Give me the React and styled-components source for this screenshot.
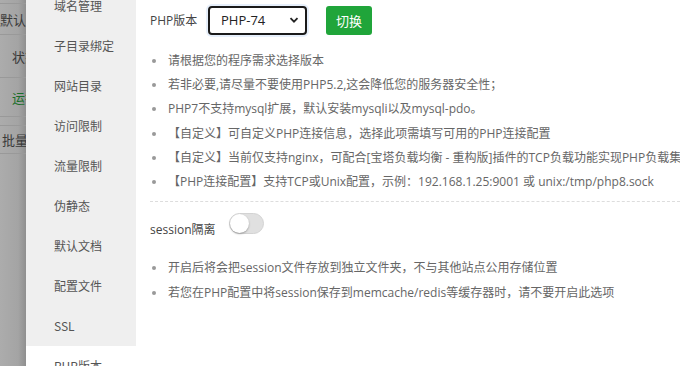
import React from 'react'
import styled, { createGlobalStyle } from 'styled-components'

//Global
const GlobalStyle = createGlobalStyle`
    html, body {
        margin: 0;
        padding: 0;
        background: #fff;
        overflow: hidden;
    }
    body {
        font-family: "Open Sans", "Noto Sans CJK SC", sans-serif;
        font-size: 12px;
    }
`

//Data
const menuItems = ['域名管理', '子目录绑定', '网站目录', '访问限制', '流量限制', '伪静态', '默认文档', '配置文件', 'SSL', 'PHP版本']

const phpTips = [
    '请根据您的程序需求选择版本',
    '若非必要,请尽量不要使用PHP5.2,这会降低您的服务器安全性；',
    'PHP7不支持mysql扩展，默认安装mysqli以及mysql-pdo。',
    '【自定义】可自定义PHP连接信息，选择此项需填写可用的PHP连接配置',
    '【自定义】当前仅支持nginx，可配合[宝塔负载均衡 - 重构版]插件的TCP负载功能实现PHP负载集群',
    '【PHP连接配置】支持TCP或Unix配置，示例：192.168.1.25:9001 或 unix:/tmp/php8.sock',
]

const sessionTips = [
    '开启后将会把session文件存放到独立文件夹，不与其他站点公用存储位置',
    '若您在PHP配置中将session保存到memcache/redis等缓存器时，请不要开启此选项',
]

//Styles
const Page = styled.div`
    display: flex;
    width: 680px;
    height: 366px;
    overflow: hidden;
`
const Backdrop = styled.div`
    width: 26px;
    flex-shrink: 0;
    overflow: hidden;
    background: linear-gradient(to right, #acacac 0%, #a4a4a4 70%, #8f8f8f 100%);
    padding-top: 3px;
`
const BackdropRow = styled.div`
    height: ${p => p.$h}px;
    border-top: 1px solid #999;
    display: flex;
    align-items: center;
    padding-left: ${p => p.$indent}px;
    white-space: nowrap;
    color: ${p => p.$green ? '#1b6e2b' : '#3a3a3a'};
    font-size: 13px;
    font-family: "Noto Sans CJK SC", sans-serif;
`
const Sidebar = styled.div`
    width: 110px;
    flex-shrink: 0;
    background: #efefef;
    overflow: hidden;
`
const Menu = styled.ul`
    list-style: none;
    margin: -14px 0 0;
    padding: 0;
`
const MenuItem = styled.li`
    height: 40px;
    line-height: 40px;
    padding-left: 28px;
    color: #555;
    font-size: 12px;
    background: ${p => p.$active ? '#fff' : 'transparent'};
    font-family: "Noto Sans CJK SC", sans-serif;
`
const Content = styled.div`
    flex: 1;
    padding: 5px 0 0 14px;
    overflow: hidden;
    white-space: nowrap;
`
const VersionRow = styled.div`
    display: flex;
    align-items: center;
    height: 30px;
`
const FieldLabel = styled.span`
    color: #444;
    font-size: 12px;
    width: ${p => p.$w}px;
    flex-shrink: 0;
`
const SelectBox = styled.div`
    box-sizing: border-box;
    width: 99px;
    height: 29px;
    border: 2px solid #1a1a1a;
    border-radius: 4px;
    display: flex;
    align-items: center;
    justify-content: space-between;
    padding: 0 6px 0 11px;
    color: #222;
    font-size: 13px;
    box-shadow: 0 0 0 2px #e6effb;
`
const SwitchButton = styled.button`
    margin-left: 19px;
    width: 46px;
    height: 29px;
    border: none;
    border-radius: 3px;
    background: #20a53a;
    color: #fff;
    font-size: 13px;
    font-family: "Noto Sans CJK SC", sans-serif;
    padding: 0;
`
const TipList = styled.ul`
    list-style: none;
    margin: ${p => p.$top}px 0 0;
    padding: 0 0 0 2px;
`
const Tip = styled.li`
    position: relative;
    height: ${p => p.$h}px;
    line-height: ${p => p.$h}px;
    padding-left: 16px;
    color: #666;
    font-size: 12px;

    &::before {
        content: '';
        position: absolute;
        left: 0;
        top: 50%;
        width: 4px;
        height: 4px;
        margin-top: -2px;
        border-radius: 50%;
        background: #999;
    }
`
const Divider = styled.div`
    margin-top: 7px;
    border-top: 1px dashed #ddd;
`
const SessionRow = styled.div`
    display: flex;
    align-items: center;
    margin-top: 6px;
    height: 30px;
`
const SessionLabel = styled.span`
    color: #444;
    font-size: 12px;
    padding-top: 11px;
    width: 79px;
`
const Toggle = styled.div`
    position: relative;
    box-sizing: border-box;
    width: 35px;
    height: 21px;
    border-radius: 11px;
    background: #e0e0e0;
    border: 1px solid #d3d3d3;

    &::after {
        content: '';
        position: absolute;
        left: 0;
        top: 0;
        width: 19px;
        height: 19px;
        border-radius: 50%;
        background: #fff;
        box-shadow: 0 1px 2px rgba(0,0,0,0.3);
    }
`

//Main Component
function App() {
    return (
        <>
        <GlobalStyle />
        <Page>
            <Backdrop>
                <BackdropRow $h={30} $indent={0}>默认站</BackdropRow>
                <BackdropRow $h={42} $indent={12}>状态</BackdropRow>
                <BackdropRow $h={38} $indent={12} $green>运行</BackdropRow>
                <BackdropRow $h={8} $indent={0}></BackdropRow>
                <BackdropRow $h={27} $indent={2}>批量</BackdropRow>
                <BackdropRow $h={1} $indent={0}></BackdropRow>
            </Backdrop>

            <Sidebar>
                <Menu>
                    { menuItems.map(item => (
                        <MenuItem key={item} $active={item === 'PHP版本'}>{item}</MenuItem>
                    ))}
                </Menu>
            </Sidebar>

            <Content>
                <VersionRow>
                    <FieldLabel $w={58}>PHP版本</FieldLabel>
                    <SelectBox>
                        <span>PHP-74</span>
                        <svg width="10" height="10" viewBox="0 0 10 10">
                            <path d="M1.5 3.2 L5 6.7 L8.5 3.2" fill="none" stroke="#222" strokeWidth="1.8" />
                        </svg>
                    </SelectBox>
                    <SwitchButton>切换</SwitchButton>
                </VersionRow>

                <TipList $top={14}>
                    { phpTips.map(tip => <Tip key={tip} $h={24.2}>{tip}</Tip>) }
                </TipList>

                <Divider />

                <SessionRow>
                    <SessionLabel>session隔离</SessionLabel>
                    <Toggle />
                </SessionRow>

                <TipList $top={17}>
                    { sessionTips.map(tip => <Tip key={tip} $h={25}>{tip}</Tip>) }
                </TipList>
            </Content>
        </Page>
        </>
    )
}

//Export
export default App
